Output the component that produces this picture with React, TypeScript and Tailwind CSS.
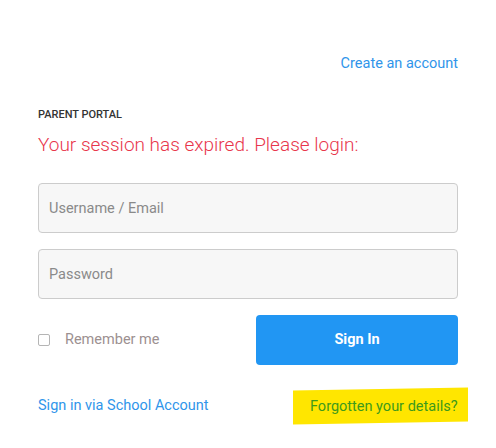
export default function App() {
    return (
        <div className="min-h-[448px] w-[496px] bg-white font-['Roboto',sans-serif]">
            <div className="mx-[38px] w-[420px] pt-[54px]">
                <div className="flex justify-end">
                    <a href="#" className="text-[14.5px] leading-5 text-[#2f95ea]">
                        Create an account
                    </a>
                </div>
                <div className="mt-[33px] text-[11px] font-medium uppercase leading-4 text-[#333333]">
                    Parent Portal
                </div>
                <h1 className="mt-[10px] text-[19px] font-light leading-6 text-[#e8364c]">
                    Your session has expired. Please login:
                </h1>
                <form className="mt-[26px] flex flex-col gap-4">
                    <input
                        type="text"
                        placeholder="Username / Email"
                        className="h-[50px] w-full rounded border border-[#cccccc] bg-[#f7f7f7] px-[10px] text-[14.5px] text-[#555] placeholder:text-[#8a8a8a] outline-none"
                    />
                    <input
                        type="password"
                        placeholder="Password"
                        className="h-[50px] w-full rounded border border-[#cccccc] bg-[#f7f7f7] px-[10px] text-[14.5px] text-[#555] placeholder:text-[#8a8a8a] outline-none"
                    />
                    <div className="flex items-center justify-between">
                        <label className="flex items-center gap-[15px]">
                            <span className="h-3 w-3 rounded-[2px] border border-[#b5b5b5] bg-white" />
                            <span className="text-[14.5px] text-[#9c9090]">Remember me</span>
                        </label>
                        <button
                            type="button"
                            className="h-[50px] w-[202px] rounded bg-[#2196f3] text-[14.5px] font-bold text-white"
                        >
                            Sign In
                        </button>
                    </div>
                </form>
                <div className="mt-[24px] flex items-center justify-between">
                    <a href="#" className="text-[14.5px] leading-5 text-[#2f95ea]">
                        Sign in via School Account
                    </a>
                    <span className="-mr-[10px] -skew-y-1 bg-[#ffe600] py-[5px] pl-[17px] pr-[10px]">
                        <a href="#" className="inline-block skew-y-1 text-[14.5px] leading-5 text-[#3d9a1c]">
                            Forgotten your details?
                        </a>
                    </span>
                </div>
            </div>
        </div>
    );
}
